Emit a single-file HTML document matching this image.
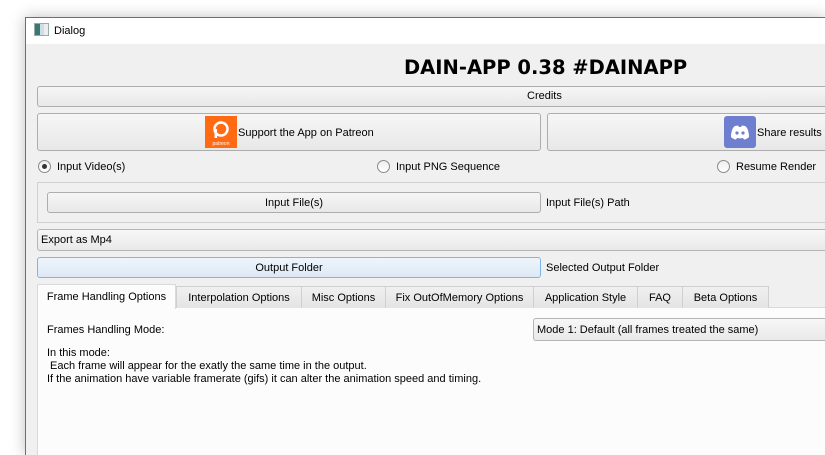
<!DOCTYPE html>
<html><head><style>
*{margin:0;padding:0;box-sizing:border-box}
html,body{width:825px;height:455px;overflow:hidden}
body{background:#fff;position:relative;font-family:"Liberation Sans","DejaVu Sans",sans-serif;font-size:11px;color:#000}
.a{position:absolute}
.win{left:25px;top:17px;width:800px;height:438px;border:1px solid #6f6f6f;border-right:none;border-bottom:none;background:#f0f0f0;box-shadow:0 0 14px rgba(0,0,0,.25)}
.tb{left:26px;top:18px;width:799px;height:26px;background:#fff}
.btn{position:absolute;border:1px solid #adadad;border-radius:3px;background:linear-gradient(#f6f6f6,#e8e8e8);display:flex;align-items:center;justify-content:center;white-space:nowrap;overflow:hidden}
.t{position:absolute;white-space:nowrap;line-height:13px}
.radio{position:absolute;width:13px;height:13px;border-radius:50%;border:1px solid #8a8a8a;background:linear-gradient(#eee,#fff)}
.tab{position:absolute;top:286px;height:22px;border:1px solid #d0d0d0;border-bottom:none;background:linear-gradient(#f0f0f0,#e4e4e4);display:flex;align-items:center;justify-content:center;white-space:nowrap}
</style></head><body>
<div class="a win"></div>
<div class="a tb"></div>
<div class="a" style="left:34px;top:23px;width:15px;height:13px;border:1px solid #9aa;background:linear-gradient(90deg,#3b7a6a 0 40%,#cde 40% 70%,#eee 70%)"></div>
<div class="t" style="left:54px;top:25px">Dialog</div>

<div class="t" style="left:404px;top:57px;font-family:'DejaVu Sans',sans-serif;font-weight:bold;font-size:19.5px;line-height:22px">DAIN-APP 0.38 #DAINAPP</div>

<div class="btn" style="left:37px;top:86px;width:788px;height:21px;border-right:none;border-radius:3px 0 0 3px"><span style="position:absolute;left:489px;top:3px">Credits</span></div>

<div class="btn" style="left:37px;top:113px;width:504px;height:38px"></div>
<div class="a" style="left:205px;top:116px;width:32px;height:32px;background:#ff6a12"></div>
<svg class="a" style="left:205px;top:116px" width="32" height="32"><circle cx="16" cy="13" r="6.5" fill="none" stroke="#fff" stroke-width="2.5"/><line x1="10.8" y1="13" x2="10.8" y2="22" stroke="#fff" stroke-width="2.5"/><text x="16" y="29" font-size="5" fill="#fff" text-anchor="middle" font-family="Liberation Sans">patreon</text></svg>
<div class="t" style="left:238px;top:127px">Support the App on Patreon</div>

<div class="btn" style="left:547px;top:113px;width:278px;height:38px;border-right:none;border-radius:3px 0 0 3px"></div>
<div class="a" style="left:724px;top:116px;width:32px;height:32px;border-radius:3px;background:#6f7fcf"></div>
<svg class="a" style="left:724px;top:116px" width="32" height="32"><path d="M7 21 C7 15 9 11 11 10 L14 9.5 L15 11 L17 11 L18 9.5 L21 10 C23 11 25 15 25 21 C23 23 21 23.5 20 23.5 L19 22 C17 22.5 15 22.5 13 22 L12 23.5 C11 23.5 9 23 7 21Z" fill="#fff"/><circle cx="13" cy="17" r="1.6" fill="#6f7fcf"/><circle cx="19" cy="17" r="1.6" fill="#6f7fcf"/></svg>
<div class="t" style="left:757px;top:127px;width:68px;overflow:hidden">Share results on Discord</div>

<div class="radio" style="left:38px;top:160px"><div class="a" style="left:3px;top:3px;width:5px;height:5px;border-radius:50%;background:#333"></div></div>
<div class="t" style="left:57px;top:161px">Input Video(s)</div>
<div class="radio" style="left:377px;top:160px"></div>
<div class="t" style="left:396px;top:161px">Input PNG Sequence</div>
<div class="radio" style="left:717px;top:160px"></div>
<div class="t" style="left:736px;top:161px">Resume Render</div>

<div class="a" style="left:37px;top:182px;width:788px;height:41px;border:1px solid #d0d0d0;border-right:none"></div>
<div class="btn" style="left:47px;top:192px;width:494px;height:21px">Input File(s)</div>
<div class="t" style="left:546px;top:197px">Input File(s) Path</div>

<div class="a" style="left:37px;top:229px;width:788px;height:22px;border:1px solid #b5b5b5;border-right:none;border-radius:3px 0 0 3px;background:linear-gradient(#f7f7f7,#e9e9e9)"></div>
<div class="t" style="left:41px;top:234px">Export as Mp4</div>

<div class="btn" style="left:37px;top:257px;width:504px;height:21px;border-color:#7eb4ea;background:linear-gradient(#eef5fc,#dde9f5)">Output Folder</div>
<div class="t" style="left:546px;top:262px">Selected Output Folder</div>

<div class="a" style="left:37px;top:307px;width:788px;height:148px;border:1px solid #d9d9d9;border-right:none;border-bottom:none;background:#fcfcfc"></div>
<div class="tab" style="left:176px;width:126px">Interpolation Options</div>
<div class="tab" style="left:301px;width:85px">Misc Options</div>
<div class="tab" style="left:385px;width:149px">Fix OutOfMemory Options</div>
<div class="tab" style="left:533px;width:105px">Application Style</div>
<div class="tab" style="left:637px;width:46px">FAQ</div>
<div class="tab" style="left:682px;width:87px">Beta Options</div>
<div class="tab" style="left:37px;top:284px;height:25px;width:139px;background:#fcfcfc;border-color:#d9d9d9">Frame Handling Options</div>

<div class="t" style="left:47px;top:324px">Frames Handling Mode:</div>
<div class="a" style="left:533px;top:318px;width:292px;height:23px;border:1px solid #b5b5b5;border-right:none;border-radius:3px 0 0 3px;background:linear-gradient(#f7f7f7,#e9e9e9)"></div>
<div class="t" style="left:537px;top:324px">Mode 1: Default (all frames treated the same)</div>

<div class="t" style="left:47px;top:347px">In this mode:</div>
<div class="t" style="left:47px;top:360px">&nbsp;Each frame will appear for the exatly the same time in the output.</div>
<div class="t" style="left:47px;top:373px">If the animation have variable framerate (gifs) it can alter the animation speed and timing.</div>
</body></html>
